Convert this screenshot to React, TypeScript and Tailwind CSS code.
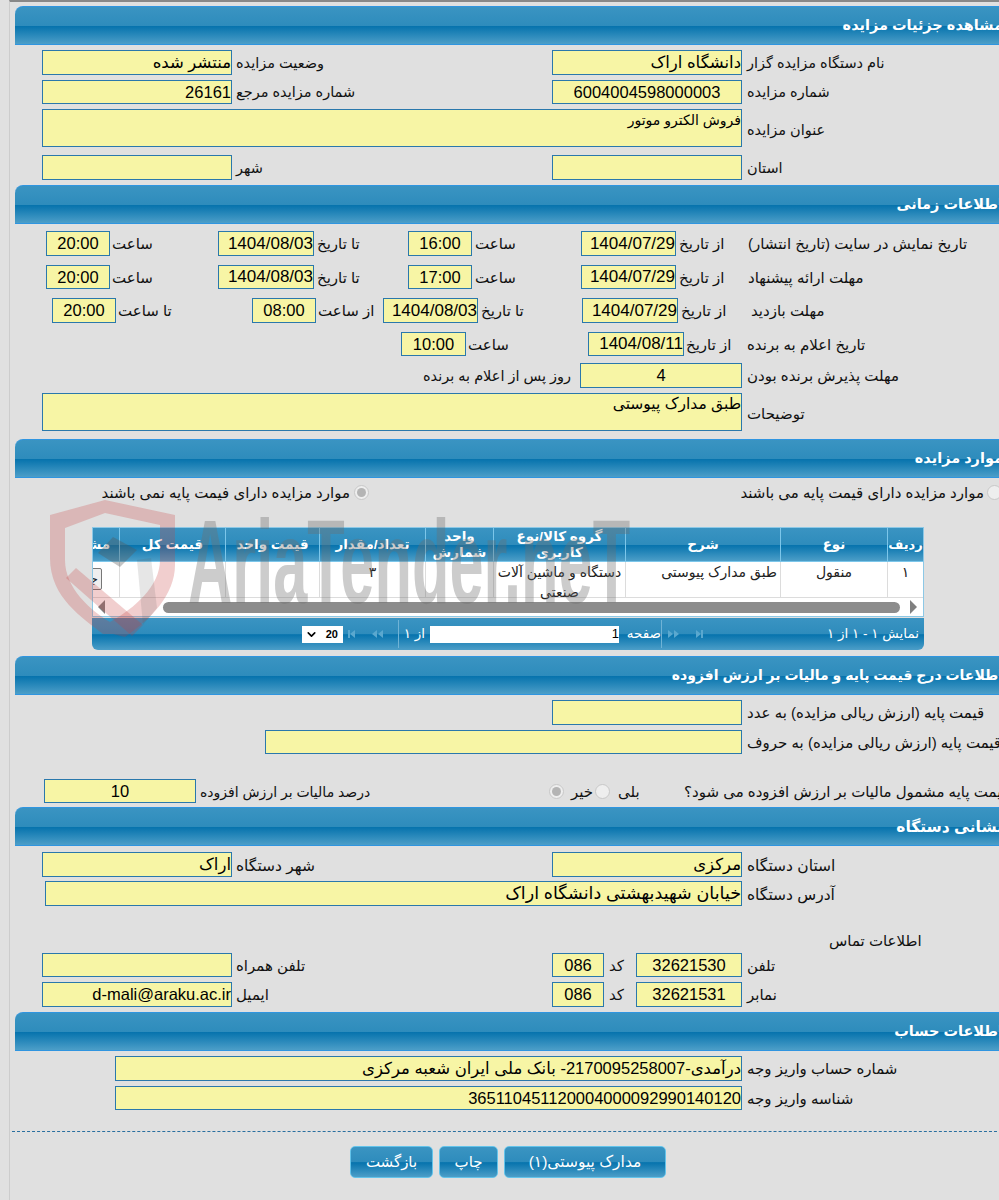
import type { ReactNode } from 'react'
import { ChevronDown } from 'lucide-react'

const HEAD_BG = 'bg-[linear-gradient(to_bottom,#3a94c2_0%,#2e8cbc_50%,#0673ad_52%,#4c9ec8_100%)]'

function Box({ className = '', children }: { className?: string; children?: ReactNode }) {
  return (
    <div dir="rtl" className={`flex h-full shrink-0 overflow-hidden whitespace-nowrap border border-[#2a78ac] bg-[#f7f5a5] text-[16.5px] text-black ${className}`}>
      {children}
    </div>
  )
}

function Lbl({ className = '', children }: { className?: string; children?: ReactNode }) {
  return (
    <div dir="rtl" className={`shrink-0 whitespace-nowrap pt-[2px] text-left text-[15px] text-[#111] ${className}`}>
      {children}
    </div>
  )
}

function Radio({ checked = false }: { checked?: boolean }) {
  return (
    <span className="flex h-[15px] w-[15px] shrink-0 items-center justify-center rounded-full border border-[#c8c8c8] bg-[#eeeeee]">
      {checked && <span className="h-[9px] w-[9px] rounded-full bg-[#b4b4b4]" />}
    </span>
  )
}

function Header({ title, className = '' }: { title: string; className?: string }) {
  return (
    <div dir="rtl" className={`flex h-[39px] w-[988px] items-center rounded-tl-[8px] border-y border-[#2f95e0] text-[14.5px] font-bold text-white ${HEAD_BG} ${className}`}>
      {title}
    </div>
  )
}

const center = 'items-center justify-center'
const right = 'items-center justify-start'

function Triangles({ flip, bar, double }: { flip?: boolean; bar?: boolean; double?: boolean }) {
  return (
    <svg width="16" height="10" viewBox="0 0 16 10" className={flip ? 'mx-[3px] -scale-x-100' : 'mx-[3px]'} fill="#5aa8cf">
      {bar && <rect x="2" y="1" width="2" height="8" />}
      <path d="M4 5l5-4v8z" />
      {double && <path d="M10 5l5-4v8z" />}
    </svg>
  )
}

function Cell({ className = '', children }: { className?: string; children?: ReactNode }) {
  return <div className={`shrink-0 border-l border-[#dcdcdc] px-[3px] text-center text-[14px] leading-[20px] text-[#222] ${className}`}>{children}</div>
}

function Th({ className = '', children }: { className?: string; children?: ReactNode }) {
  return <div className={`flex shrink-0 items-center justify-center border-l border-[#7cc6ea] text-center text-[13.5px] font-bold leading-[16px] text-white ${className}`}>{children}</div>
}

export default function App() {
  return (
    <div className="relative h-[1200px] w-[999px] overflow-hidden bg-[#e0e0e0] font-['Liberation_Sans','DejaVu_Sans',sans-serif]">
      <div className="ml-[9px] h-[1200px] w-[1010px] border-l border-t-2 border-[#cccccc] border-t-[#888888] pl-[5px]">
        {/* details */}
        <Header title="مشاهده جزئیات مزایده" className="mt-[4px]" />
        <div className="mt-[5px] flex h-[25px] items-center pl-[27px]">
          <Box className={`w-[190px] ${right}`}>منتشر شده</Box>
          <Lbl className="ml-[4px] w-[316px] text-[14.5px]!">وضعیت مزایده</Lbl>
          <Box className={`w-[190px] ${right}`}>دانشگاه اراک</Box>
          <Lbl className="ml-[5px] text-[14.5px]!">نام دستگاه مزایده گزار</Lbl>
        </div>
        <div className="mt-[5px] flex h-[24px] items-center pl-[27px]">
          <Box className={`w-[190px] ${right}`}>26161</Box>
          <Lbl className="ml-[4px] w-[316px] text-[14.5px]!">شماره مزایده مرجع</Lbl>
          <Box className={`w-[190px] ${center}`}>6004004598000003</Box>
          <Lbl className="ml-[5px] text-[14.5px]!">شماره مزایده</Lbl>
        </div>
        <div className="mt-[5px] flex h-[38px] items-center pl-[27px]">
          <Box className="w-[700px] items-start justify-start text-[14px]! leading-[20px]">فروش الکترو موتور</Box>
          <Lbl className="ml-[5px] pt-[6px] text-[14.5px]!">عنوان مزایده</Lbl>
        </div>
        <div className="mt-[8px] flex h-[25px] items-center pl-[27px]">
          <Box className="w-[190px]" />
          <Lbl className="ml-[4px] w-[316px] text-[14.5px]!">شهر</Lbl>
          <Box className="w-[190px]" />
          <Lbl className="ml-[5px] text-[14.5px]!">استان</Lbl>
        </div>

        {/* dates */}
        <Header title="اطلاعات زمانی" className="mt-[5px]" />
        <div className="mt-[7px] flex h-[25px] items-center pl-[31px]">
          <Box className={`w-[64px] ${center}`}>20:00</Box>
          <Lbl className="ml-[2px] w-[106px]">ساعت</Lbl>
          <Box className={`w-[96px] text-[17px]! ${right}`}>1404/08/03</Box>
          <Lbl className="ml-[3px] w-[91px]">تا تاریخ</Lbl>
          <Box className={`w-[64px] ${center}`}>16:00</Box>
          <Lbl className="ml-[3px] w-[106px]">ساعت</Lbl>
          <Box className={`w-[95px] text-[17px]! ${right}`}>1404/07/29</Box>
          <Lbl className="ml-[3px] w-[69px]">از تاریخ</Lbl>
          <Lbl>تاریخ نمایش در سایت (تاریخ انتشار)</Lbl>
        </div>
        <div className="mt-[9px] flex h-[24px] items-center pl-[31px]">
          <Box className={`w-[64px] ${center}`}>20:00</Box>
          <Lbl className="ml-[2px] w-[106px]">ساعت</Lbl>
          <Box className={`w-[96px] text-[17px]! ${right}`}>1404/08/03</Box>
          <Lbl className="ml-[3px] w-[91px]">تا تاریخ</Lbl>
          <Box className={`w-[64px] ${center}`}>17:00</Box>
          <Lbl className="ml-[3px] w-[106px]">ساعت</Lbl>
          <Box className={`w-[95px] text-[17px]! ${right}`}>1404/07/29</Box>
          <Lbl className="ml-[3px] w-[69px]">از تاریخ</Lbl>
          <Lbl>مهلت ارائه پیشنهاد</Lbl>
        </div>
        <div className="mt-[9px] flex h-[25px] items-center pl-[37px]">
          <Box className={`w-[64px] ${center}`}>20:00</Box>
          <Lbl className="ml-[2px] w-[134px]">تا ساعت</Lbl>
          <Box className={`w-[64px] ${center}`}>08:00</Box>
          <Lbl className="ml-[2px] w-[65px]">از ساعت</Lbl>
          <Box className={`w-[95px] text-[17px]! ${right}`}>1404/08/03</Box>
          <Lbl className="ml-[3px] w-[101px]">تا تاریخ</Lbl>
          <Box className={`w-[96px] text-[17px]! ${right}`}>1404/07/29</Box>
          <Lbl className="ml-[3px] w-[70px]">از تاریخ</Lbl>
          <Lbl>مهلت بازدید</Lbl>
        </div>
        <div className="mt-[9px] flex h-[24px] items-center pl-[386px]">
          <Box className={`w-[65px] ${center}`}>10:00</Box>
          <Lbl className="ml-[2px] w-[120px]">ساعت</Lbl>
          <Box className={`w-[96px] text-[17px]! ${right}`}>1404/08/11</Box>
          <Lbl className="ml-[2px] w-[61px]">از تاریخ</Lbl>
          <Lbl>تاریخ اعلام به برنده</Lbl>
        </div>
        <div className="mt-[7px] flex h-[25px] items-center pl-[408px]">
          <Lbl className="w-[157px] text-[14.5px]!">روز پس از اعلام به برنده</Lbl>
          <Box className={`w-[162px] ${center}`}>4</Box>
          <Lbl className="ml-[5px]">مهلت پذیرش برنده بودن</Lbl>
        </div>
        <div className="mt-[5px] flex h-[38px] items-center pl-[27px]">
          <Box className="w-[700px] items-start justify-start text-[15.5px]! leading-[20px]">طبق مدارک پیوستی</Box>
          <Lbl className="ml-[5px] pt-[4px]">توضیحات</Lbl>
        </div>

        {/* items */}
        <Header title="موارد مزایده" className="mt-[8px]" />
        <div className="mt-[5px] flex h-[18px] items-center pl-[86px]">
          <Lbl className="w-[249px] text-right">موارد مزایده دارای فیمت پایه نمی باشند</Lbl>
          <span className="ml-[4px]"><Radio checked /></span>
          <Lbl className="ml-[372px] w-[243px] text-right">موارد مزایده دارای قیمت پایه می باشند</Lbl>
          <span className="ml-[3px]"><Radio /></span>
        </div>

        <div className="ml-[77px] mt-[26px] w-[832px]">
          <div className="overflow-hidden border border-[#8cc8e6] bg-white">
            <div dir="rtl" className={`flex h-[34px] border-b border-[#7cc6ea] ${HEAD_BG}`}>
              <Th className="w-[36px] text-[13px]!">ردیف</Th>
              <Th className="w-[107px]">نوع</Th>
              <Th className="w-[155px]">شرح</Th>
              <Th className="w-[132px]">گروه کالا/نوع کاربری</Th>
              <Th className="w-[68px]">واحد شمارش</Th>
              <Th className="w-[106px]">تعداد/مقدار</Th>
              <Th className="w-[94px]">قیمت واحد</Th>
              <Th className="w-[106px]">قیمت کل</Th>
              <Th className="w-[60px] justify-start pr-[9px]">مشاهده</Th>
            </div>
            <div dir="rtl" className="flex h-[36px] border-b border-[#dcdcdc] bg-white">
              <Cell className="w-[36px]">۱</Cell>
              <Cell className="w-[107px]">منقول</Cell>
              <Cell className="w-[155px] text-right">طبق مدارک پیوستی</Cell>
              <Cell className="w-[132px]">دستگاه و ماشین آلات صنعتی</Cell>
              <Cell className="w-[68px]" />
              <Cell className="w-[106px]">۳</Cell>
              <Cell className="w-[94px]" />
              <Cell className="w-[106px]" />
              <div className="relative w-[60px] shrink-0 pr-[17px] pt-[6px]">
                <div className="flex h-[22px] w-[40px] items-center justify-start overflow-hidden whitespace-nowrap rounded-[2px] border border-[#777] bg-[#efefef] pr-[3px] text-[13px] text-[#222]">جزئیات</div>
              </div>
            </div>
            <div className="flex h-[18px] items-center bg-white">
              <svg width="10" height="14" viewBox="0 0 10 14" className="ml-[4px]" fill="#808080"><path d="M8 0v14L1 7z" /></svg>
              <div className="ml-[56px] h-[11px] w-[737px] rounded-full bg-[#8c8c8c]" />
              <svg width="10" height="14" viewBox="0 0 10 14" className="ml-[8px]" fill="#808080"><path d="M2 0v14l7-7z" /></svg>
            </div>
          </div>
          <div className={`mt-[1px] flex h-[32px] items-center rounded-b-[6px] pl-[210px] text-[13.5px] text-white ${HEAD_BG}`}>
            <div className="flex h-[17px] w-[41px] items-center justify-between bg-white pl-[3px] pr-[5px] text-[11px] font-bold text-black">
              <ChevronDown size={13} strokeWidth={3} />
              <span>20</span>
            </div>
            <Triangles bar />
            <Triangles double />
            <span className="ml-[11px] h-[28px] w-px bg-[#6fb3d6]" />
            <div dir="rtl" className="ml-[6px] w-[25px] whitespace-nowrap pr-[5px]">از ۱</div>
            <div className="flex h-[17px] w-[189px] items-center justify-end bg-white text-[13px] text-black">1</div>
            <div dir="rtl" className="ml-[5px] w-[37px] whitespace-nowrap">صفحه</div>
            <span className="mr-[2px] h-[28px] w-px bg-[#6fb3d6]" />
            <Triangles flip double />
            <Triangles flip bar />
            <div dir="rtl" className="ml-auto whitespace-nowrap pl-0 pr-[5px]">نمایش ۱ - ۱ از ۱</div>
          </div>
        </div>

        {/* price */}
        <Header title="اطلاعات درج قیمت پایه و مالیات بر ارزش افزوده" className="mt-[6px] text-[14px]!" />
        <div className="mt-[5px] flex h-[25px] items-center pl-[537px]">
          <Box className="w-[190px]" />
          <Lbl className="ml-[5px]">قیمت پایه (ارزش ریالی مزایده) به عدد</Lbl>
        </div>
        <div className="mt-[5px] flex h-[24px] items-center pl-[250px]">
          <Box className="w-[477px]" />
          <Lbl className="ml-[5px]">قیمت پایه (ارزش ریالی مزایده) به حروف</Lbl>
        </div>
        <div className="mt-[25px] flex h-[24px] items-center pl-[29px]">
          <Box className={`w-[152px] ${center}`}>10</Box>
          <Lbl className="ml-[4px] w-[349px] text-[14px]!">درصد مالیات بر ارزش افزوده</Lbl>
          <Radio checked />
          <Lbl className="ml-[7px] w-[24px]">خیر</Lbl>
          <Radio />
          <Lbl className="ml-[8px] w-[66px]">بلی</Lbl>
          <Lbl>قیمت پایه مشمول مالیات بر ارزش افزوده می شود؟</Lbl>
        </div>

        {/* address */}
        <Header title="نشانی دستگاه" className="mt-[4px] text-[15.5px]!" />
        <div className="mt-[6px] flex h-[25px] items-center pl-[27px]">
          <Box className={`w-[190px] ${right}`}>اراک</Box>
          <Lbl className="ml-[4px] w-[316px] text-[15.5px]!">شهر دستگاه</Lbl>
          <Box className={`w-[190px] ${right}`}>مرکزی</Box>
          <Lbl className="ml-[5px] text-[15.5px]!">استان دستگاه</Lbl>
        </div>
        <div className="mt-[4px] flex h-[25px] items-center pl-[30px]">
          <Box className={`w-[697px] text-[17.5px]! ${right}`}>خیابان شهیدبهشتی دانشگاه اراک</Box>
          <Lbl className="ml-[5px] text-[15.5px]!">آدرس دستگاه</Lbl>
        </div>
        <div className="mt-[24px] flex h-[20px] items-center pl-[814px]">
          <Lbl>اطلاعات تماس</Lbl>
        </div>
        <div className="mt-[3px] flex h-[24px] items-center pl-[27px]">
          <Box className="w-[190px]" />
          <Lbl className="ml-[4px] w-[316px]">تلفن همراه</Lbl>
          <Box className={`w-[52px] ${center}`}>086</Box>
          <Lbl className="ml-[5px] w-[27px]">کد</Lbl>
          <Box className={`w-[106px] ${center}`}>32621530</Box>
          <Lbl className="ml-[5px]">تلفن</Lbl>
        </div>
        <div className="mt-[5px] flex h-[25px] items-center pl-[27px]">
          <Box className={`w-[190px] ${right}`}>d-mali@araku.ac.ir</Box>
          <Lbl className="ml-[4px] w-[316px]">ایمیل</Lbl>
          <Box className={`w-[52px] ${center}`}>086</Box>
          <Lbl className="ml-[5px] w-[27px]">کد</Lbl>
          <Box className={`w-[106px] ${center}`}>32621531</Box>
          <Lbl className="ml-[5px]">نمابر</Lbl>
        </div>

        {/* account */}
        <Header title="اطلاعات حساب" className="mt-[5px]" />
        <div className="mt-[5px] flex h-[25px] items-center pl-[100px]">
          <Box className={`w-[627px] ${right}`}>درآمدی-2170095258007- بانک ملی ایران شعبه مرکزی</Box>
          <Lbl className="ml-[5px]">شماره حساب واریز وجه</Lbl>
        </div>
        <div className="mt-[5px] flex h-[24px] items-center pl-[100px]">
          <Box className={`w-[627px] ${right}`}>365110451120004000092990140120</Box>
          <Lbl className="ml-[5px]">شناسه واریز وجه</Lbl>
        </div>

        <div className="-ml-[3px] mt-[21px] w-[990px] border-t border-dashed border-[#2a6f9f]" />
        <div className="mt-[14px] flex pl-[335px] text-[15px] text-white">
          <div className={`flex h-[32px] w-[83px] items-center justify-center rounded-[5px] border border-[#63c3ea] ${HEAD_BG}`}>بازگشت</div>
          <div className={`ml-[6px] flex h-[32px] w-[59px] items-center justify-center rounded-[5px] border border-[#63c3ea] ${HEAD_BG}`}>چاپ</div>
          <div dir="rtl" className={`ml-[6px] flex h-[32px] w-[162px] items-center justify-center rounded-[5px] border border-[#63c3ea] text-[15.5px] ${HEAD_BG}`}>مدارک پیوستی(۱)</div>
        </div>
      </div>

      {/* watermark over the items table */}
      <div className="pointer-events-none absolute left-[48px] top-[498px] flex items-end">
        <svg width="135" height="150" viewBox="0 0 135 150">
          <path d="M2 17L57 2l70 15v50c0 30-25 55-50 72L65 136l-10 0C35 120 2 100 2 60z M17 30v32c0 28 25 50 45 62 25-14 50-36 50-62V27L57 15z" fill="#c83c3c" fillOpacity="0.25" fillRule="evenodd" />
          <path d="M28 70L95 127 84 138 18 80z" fill="#c83c3c" fillOpacity="0.25" />
          <path d="M65 39l24 13-17 17-22-14z" fill="#555" fillOpacity="0.35" />
          <path d="M95 127l-6-65 14-2 6 50z" fill="#555" fillOpacity="0.15" />
        </svg>
      </div>
      <div className="pointer-events-none absolute left-[188px] top-[497px] origin-left scale-x-[0.52] whitespace-nowrap text-[118px] font-bold leading-[130px] text-[#6e6e6e] opacity-35">
        AriaTender.neT
      </div>
    </div>
  )
}
